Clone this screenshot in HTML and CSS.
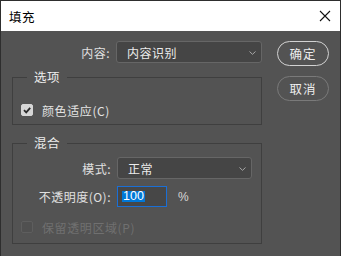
FILE: index.html
```html
<!DOCTYPE html>
<html lang="zh-CN">
<head>
    <meta charset="UTF-8">
    <meta name="viewport" content="width=device-width, initial-scale=1.0">
    <title>填充</title>
    <link rel="stylesheet" href="styles.css">
</head>
<body>
    <div class="dialog">
        <div class="titlebar">
            <span class="title">填充</span>
            <svg class="close" width="12" height="12" viewBox="0 0 12 12">
                <path d="M1 1 L11 11 M11 1 L1 11" stroke="#111" stroke-width="1.1" fill="none"/>
            </svg>
        </div>

        <div class="content">
            <div class="main">
                <div class="row">
                    <label class="label">内容:</label>
                    <div class="select wide">
                        <span>内容识别</span>
                        <svg class="chevron" width="7" height="4" viewBox="0 0 7 4"><path d="M0.5 0.5 L3.5 3.3 L6.5 0.5" stroke="#a8a8a8" fill="none"/></svg>
                    </div>
                </div>

                <fieldset class="group options">
                    <legend>选项</legend>
                    <div class="check-row">
                        <span class="checkbox checked">
                            <svg width="12" height="12" viewBox="0 0 12 12"><path d="M3 6.2 L5.2 8.4 L9.2 3.8" stroke="#2a2a2a" stroke-width="1.8" fill="none"/></svg>
                        </span>
                        <span class="check-label">颜色适应(C)</span>
                    </div>
                </fieldset>

                <fieldset class="group blend">
                    <legend>混合</legend>
                    <div class="row">
                        <label class="label">模式:</label>
                        <div class="select narrow">
                            <span>正常</span>
                            <svg class="chevron" width="7" height="4" viewBox="0 0 7 4"><path d="M0.5 0.5 L3.5 3.3 L6.5 0.5" stroke="#a8a8a8" fill="none"/></svg>
                        </div>
                    </div>
                    <div class="row opacity-row">
                        <label class="label">不透明度(O):</label>
                        <div class="num-input"><span class="selected">100</span></div>
                        <span class="unit">%</span>
                    </div>
                    <div class="check-row disabled">
                        <span class="checkbox"></span>
                        <span class="check-label">保留透明区域(P)</span>
                    </div>
                </fieldset>
            </div>

            <div class="buttons">
                <button class="btn primary">确定</button>
                <button class="btn">取消</button>
            </div>
        </div>
    </div>
</body>
</html>
```

FILE: styles.css
```css
html, body { margin: 0; padding: 0; }
body {
    font-family: "Noto Sans CJK SC", "Noto Sans", sans-serif;
    font-size: 12px;
    background-color: #535353;
    color: #e4e4e4;
}
.dialog {
    width: 341px;
    height: 256px;
    box-sizing: border-box;
    border: 1px solid #2e2e2e;
    border-bottom: none;
    background-color: #535353;
}
.titlebar {
    height: 30px;
    background-color: #fff;
    display: flex;
    align-items: center;
    justify-content: space-between;
    padding: 0 9px 0 8px;
}
.title { color: #000; font-size: 12.5px; letter-spacing: 0.5px; }

.content { display: flex; padding: 10px 0 0 11px; }
.main { width: 250px; }

.row { display: flex; align-items: center; height: 22px; }
.label {
    width: 98px;
    text-align: right;
    margin-right: 6px;
    letter-spacing: 0.5px;
    color: #e0e0e0;
}
.select {
    height: 22px;
    box-sizing: border-box;
    border: 1px solid #666;
    border-radius: 3px;
    background-color: #454545;
    display: flex;
    align-items: center;
    justify-content: space-between;
    padding: 0 5px 0 10px;
    color: #ececec;
    letter-spacing: 0.5px;
}
.select.wide { width: 146px; }
.select.narrow { width: 135px; }
.chevron { margin-top: 1px; }

.group {
    margin: 6px 0 0 0;
    padding: 0;
    border: 1px solid #3f3f3f;
    border-radius: 0;
}
.group legend {
    margin-left: 14px;
    padding: 0 7px;
    line-height: 16px;
    font-size: 12.5px;
    letter-spacing: 0.5px;
    color: #ececec;
}
.options { padding: 17px 0 6px 0; }
.blend { margin-top: 10px; padding: 6px 0 8px 0; }

.check-row { display: flex; align-items: center; height: 16px; padding-left: 8px; }
.checkbox {
    width: 12px;
    height: 12px;
    box-sizing: border-box;
    border: 1px solid #5e5e5e;
    border-radius: 2px;
    background-color: #505050;
    margin-right: 9px;
    display: flex;
}
.checkbox.checked { background-color: #d6d6d6; border-color: #d6d6d6; }
.checkbox.checked svg { margin: -1px; }
.check-label { letter-spacing: 0.6px; }
.disabled { margin-top: 12px; }
.disabled .check-label { color: #707070; }

.opacity-row { margin-top: 7px; height: 21px; }
.num-input {
    width: 50px;
    height: 21px;
    box-sizing: border-box;
    border: 1px solid #1a6fd6;
    background-color: #474747;
    display: flex;
    align-items: center;
    padding-left: 4px;
}
.selected {
    background-color: #0078d7;
    color: #fff;
    font-family: "Liberation Sans", sans-serif;
    font-size: 12.5px;
    line-height: 11px;
    padding: 0 1px;
}
.unit {
    margin-left: 11px;
    font-family: "Liberation Sans", sans-serif;
    font-size: 12px;
    color: #d8d8d8;
}

.buttons {
    display: flex;
    flex-direction: column;
    gap: 10px;
    margin-left: 15px;
}
.btn {
    width: 52px;
    height: 25px;
    border-radius: 13px;
    border: 1px solid #7a7a7a;
    background-color: #535353;
    color: #ececec;
    font-family: "Noto Sans CJK SC", sans-serif;
    font-size: 12.5px;
    letter-spacing: 1px;
    padding: 0;
}
.btn.primary { border: 1.5px solid #d2d2d2; }
```
